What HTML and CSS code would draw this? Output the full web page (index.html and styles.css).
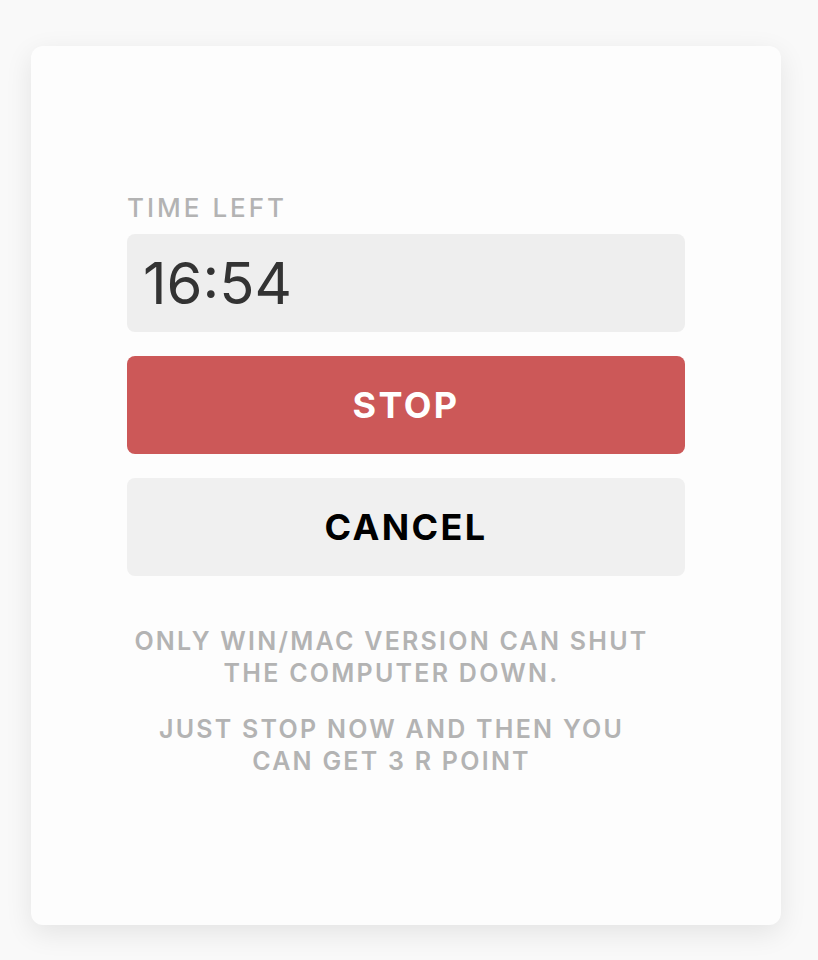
FILE: index.html
```html
<!DOCTYPE html>
<html>
<head>
<meta charset="utf-8">
<link rel="stylesheet" href="styles.css">
</head>
<body>
<div class="card">
  <div class="content">
    <div class="label">TIME LEFT</div>
    <div class="time-box"><span class="time">16:54</span></div>
    <button class="btn btn-stop">STOP</button>
    <button class="btn btn-cancel">CANCEL</button>
    <div class="notes">
      <p class="note">ONLY WIN/MAC VERSION CAN SHUT THE COMPUTER DOWN.</p>
      <p class="note">JUST STOP NOW AND THEN YOU CAN GET 3 R POINT</p>
    </div>
  </div>
</div>
</body>
</html>
```
FILE: styles.css
```css
html, body {
  margin: 0;
  padding: 0;
  background: #f9f9f9;
  font-family: Inter, "Noto Sans", "Liberation Sans", sans-serif;
}
body {
  padding: 46px 37px 35px 31px;
}
.card {
  width: 750px;
  height: 879px;
  box-sizing: border-box;
  background: #fdfdfd;
  border-radius: 12px;
  box-shadow: 0 8px 28px rgba(0, 0, 0, 0.09);
  padding: 147px 96px 0;
}
.content {
  display: flex;
  flex-direction: column;
}
.label {
  font-size: 26px;
  line-height: 30px;
  font-weight: 500;
  letter-spacing: 3px;
  color: #b3b3b3;
  margin-bottom: 11px;
}
.time-box {
  height: 98px;
  background: #eeeeee;
  border-radius: 8px;
  display: flex;
  align-items: center;
  padding: 0 16px;
}
.time {
  font-size: 58px;
  font-weight: 400;
  color: #333333;
  line-height: 1;
}
.btn {
  height: 98px;
  border: none;
  border-radius: 8px;
  margin-top: 24px;
  font-family: inherit;
  font-size: 36px;
  font-weight: 700;
  letter-spacing: 2.4px;
  padding: 0;
}
.btn-stop {
  background: #cc5858;
  color: #ffffff;
}
.btn-cancel {
  background: #f0f0f0;
  color: #000000;
}
.notes {
  margin-top: 49px;
  padding: 0 32px 0 3px;
  text-align: center;
}
.note {
  margin: 0;
  font-size: 25px;
  line-height: 32px;
  font-weight: 600;
  letter-spacing: 2.25px;
  color: #b3b3b3;
}
.note + .note {
  margin-top: 24px;
}
```
